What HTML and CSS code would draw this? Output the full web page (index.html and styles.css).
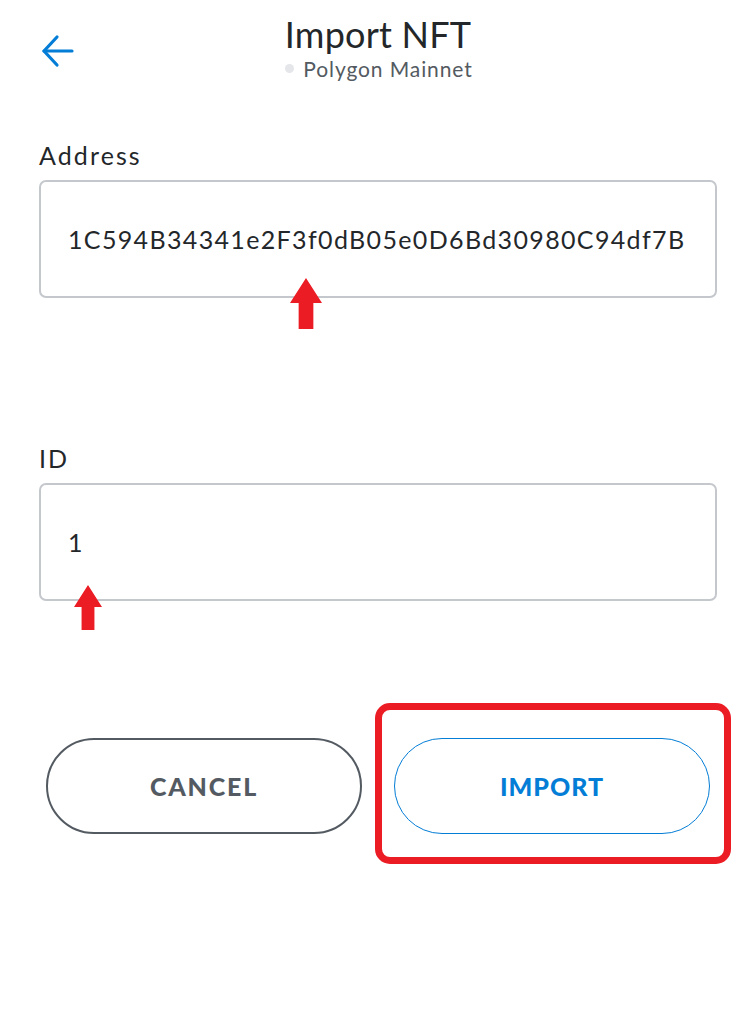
FILE: index.html
```html
<!DOCTYPE html>
<html lang="en">
<head>
<meta charset="utf-8">
<title>Import NFT</title>
<link rel="stylesheet" href="styles.css">
</head>
<body>
<div class="page">
  <header class="header">
    <button class="back" aria-label="Back">
      <svg width="34" height="34" viewBox="0 0 34 34" fill="none" stroke="#037dd6" stroke-width="3.2" stroke-linecap="round" stroke-linejoin="round">
        <path d="M31 17H3"/>
        <path d="M16 3L3 17L16 31"/>
      </svg>
    </button>
    <div class="title-block">
      <h1 class="title">Import NFT</h1>
      <div class="network"><span class="dot"></span><span>Polygon Mainnet</span></div>
    </div>
    <div class="spacer"></div>
  </header>

  <main class="form">
    <div class="field field-address">
      <label class="label">Address</label>
      <div class="input-box">
        <span class="value">1C594B34341e2F3f0dB05e0D6Bd30980C94df7B</span>
        <span class="red-arrow arrow-address"></span>
      </div>
    </div>

    <div class="field field-id">
      <label class="label">ID</label>
      <div class="input-box">
        <span class="value">1</span>
        <span class="red-arrow arrow-id"></span>
      </div>
    </div>

    <div class="actions">
      <button class="btn btn-cancel">CANCEL</button>
      <div class="btn-wrap">
        <button class="btn btn-import">IMPORT</button>
        <span class="highlight"></span>
      </div>
    </div>
  </main>
</div>
</body>
</html>
```

FILE: styles.css
```css
* { box-sizing: border-box; }

html, body {
  margin: 0;
  padding: 0;
  background: #ffffff;
}

body {
  font-family: "Lato", "Noto Sans", sans-serif;
  color: #24272a;
}

.page {
  width: 756px;
  min-height: 1024px;
}

.header {
  display: grid;
  grid-template-columns: 120px 1fr 120px;
  align-items: start;
  padding-top: 12px;
  height: 100px;
}

.back {
  background: none;
  border: 0;
  padding: 0;
  margin: 22px 0 0 41px;
  width: 34px;
  height: 34px;
  display: flex;
  cursor: pointer;
}

.title-block {
  display: flex;
  flex-direction: column;
  align-items: center;
}

.title {
  margin: 0;
  font-size: 36px;
  font-weight: 400;
  line-height: 44px;
  letter-spacing: 0.2px;
  color: #24272a;
}

.network {
  display: flex;
  align-items: center;
  gap: 9px;
  font-size: 21px;
  line-height: 25px;
  letter-spacing: 0.9px;
  color: #535a61;
  margin-left: 2px;
}

.dot {
  width: 9px;
  height: 9px;
  border-radius: 50%;
  background: #e4e6e9;
}

.form {
  padding: 40px 39px 0 39px;
}

.field {
  display: flex;
  flex-direction: column;
}

.label {
  font-size: 25px;
  line-height: 30px;
  margin-bottom: 10px;
  letter-spacing: 2.1px;
  color: #24272a;
}

.field-id {
  margin-top: 145px;
}

.input-box {
  position: relative;
  height: 118px;
  border: 2px solid #c4c8cc;
  border-radius: 7px;
  display: flex;
  align-items: center;
  padding: 0 0 0 27px;
}

.value {
  font-size: 25px;
  color: #24272a;
  letter-spacing: 1.35px;
}

.red-arrow {
  position: absolute;
  width: 32px;
  height: 51px;
  background: #ec1c24;
  clip-path: polygon(50% 0, 100% 49%, 73% 49%, 73% 100%, 27% 100%, 27% 49%, 0 49%);
}

.arrow-address {
  left: 249px;
  top: 96px;
}

.arrow-id {
  left: 33px;
  top: 100px;
  width: 28px;
  height: 45px;
}

.actions {
  display: grid;
  grid-template-columns: 316px 316px;
  column-gap: 32px;
  padding: 0 8px 0 7px;
  margin-top: 137px;
}

.btn {
  height: 96px;
  border-radius: 48px;
  background: #ffffff;
  font-family: "Lato", "Noto Sans", sans-serif;
  font-size: 25px;
  font-weight: 900;
  letter-spacing: 1px;
  cursor: pointer;
  width: 100%;
}

.btn-cancel {
  border: 2px solid #535a61;
  color: #535a61;
  letter-spacing: 1.8px;
}

.btn-wrap {
  position: relative;
}

.btn-import {
  border: 1.5px solid #037dd6;
  color: #037dd6;
}

.highlight {
  position: absolute;
  left: -19px;
  right: -21px;
  top: -35px;
  bottom: -30px;
  border: 7px solid #ec1c24;
  border-radius: 15px;
  pointer-events: none;
}
```
